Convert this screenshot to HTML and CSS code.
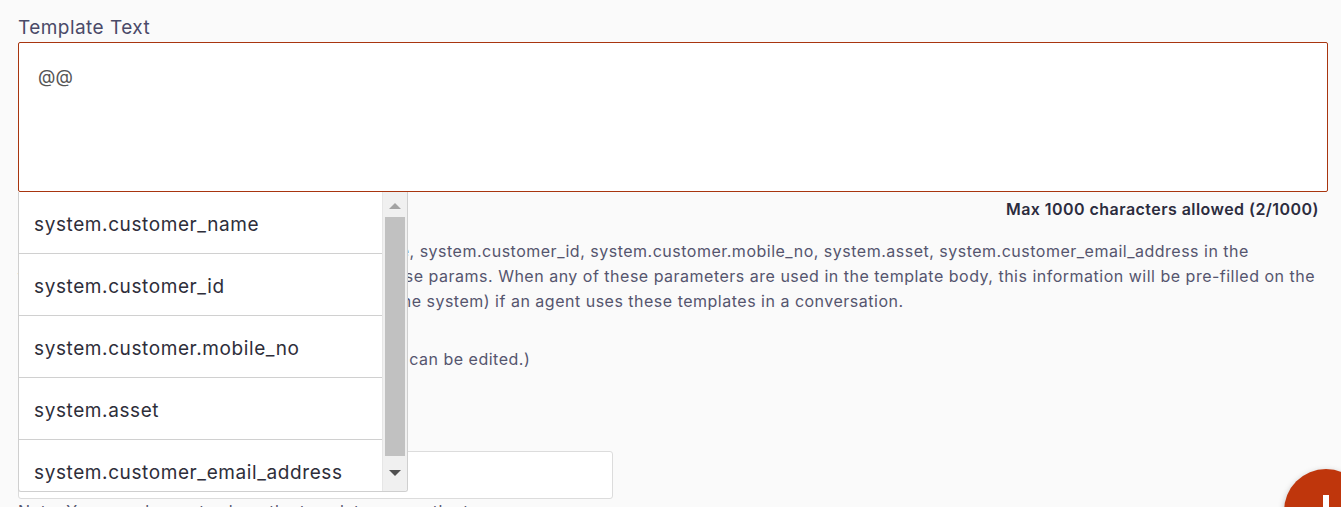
FILE: index.html
```html
<!DOCTYPE html>
<html>
<head>
<meta charset="utf-8">
<link rel="stylesheet" href="styles.css">
</head>
<body>
<div class="page">
  <label class="label">Template Text</label>
  <div class="field">
    <div class="textarea">@@</div>
    <div class="menu">
      <ul class="menu-list">
        <li class="menu-item">system.customer_name</li>
        <li class="menu-item">system.customer_id</li>
        <li class="menu-item">system.customer.mobile_no</li>
        <li class="menu-item">system.asset</li>
        <li class="menu-item">system.customer_email_address</li>
      </ul>
      <div class="scrollbar">
        <div class="arrow up"></div>
        <div class="thumb"></div>
        <div class="arrow down"></div>
      </div>
    </div>
  </div>
  <div class="counter">Max 1000 characters allowed (2/1000)</div>
  <p class="help">Note: You can add fields system.customer_name, system.customer_id, system.customer.mobile_no, system.asset, system.customer_email_address in the<br>template body. Type @@ in the editor to see these params. When any of these parameters are used in the template body, this information will be pre-filled on the<br>customer info (if the information is available in the system) if an agent uses these templates in a conversation.<br>Example: Hi @@</p>
  <p class="help">(Note: Only the values of the parameters in bold can be edited.)</p>
  <div class="input-row">
    <div class="input"></div>
  </div>
  <p class="note">Note: You can choose to share the template across the team.</p>
</div>
<button class="fab" aria-label="Add"><span class="plus"></span></button>
</body>
</html>
```

FILE: styles.css
```css
html, body {
  margin: 0;
  padding: 0;
  background: #fafafa;
  font-family: Inter, "Open Sans", sans-serif;
  overflow: hidden;
  height: 507px;
}

.page {
  padding: 14px 13px 0 18px;
}

.label {
  display: block;
  font-size: 19px;
  letter-spacing: 0.45px;
  line-height: 28px;
  color: #4a4a68;
}

.field {
  position: relative;
}

.textarea {
  height: 150px;
  background: #fff;
  border: 1px solid #a8350f;
  border-radius: 2px;
  padding: 22px 19px;
  box-sizing: border-box;
  font-size: 18px;
  color: #555;
  line-height: 24px;
}

.menu {
  position: absolute;
  left: 0;
  top: 150px;
  width: 390px;
  height: 300px;
  background: #fff;
  border: 1px solid #cfcfcf;
  border-top: none;
  border-radius: 0 0 3px 3px;
  box-sizing: border-box;
  display: flex;
  z-index: 2;
  overflow: hidden;
}

.menu-list {
  list-style: none;
  margin: 0;
  padding: 0;
  flex: 1;
  overflow: hidden;
}

.menu-item {
  height: 62px;
  box-sizing: border-box;
  border-bottom: 1px solid #d0d0d0;
  padding: 3px 15px 0;
  display: flex;
  align-items: center;
  font-size: 19px;
  letter-spacing: 0.6px;
  color: #2e2e3a;
}

.menu-item:last-child {
  border-bottom: none;
}

.scrollbar {
  width: 24px;
  background: #f0f0f0;
  display: flex;
  flex-direction: column;
  align-items: center;
  border-left: 1px solid #e6e6e6;
}

.arrow {
  width: 0;
  height: 0;
  border-left: 6px solid transparent;
  border-right: 6px solid transparent;
}

.arrow.up {
  border-bottom: 6px solid #a3a3a3;
  margin: 11px 0 8px;
}

.arrow.down {
  border-top: 6px solid #505050;
  margin: 14px 0 0;
}

.thumb {
  width: 20px;
  height: 239px;
  background: #c1c1c1;
}

.counter {
  text-align: right;
  font-size: 16px;
  letter-spacing: 0.45px;
  font-weight: 600;
  color: #2c2c3e;
  padding: 7px 9px 0 0;
  line-height: 20px;
}

.help {
  margin: 20px 0 0;
  font-size: 16px;
  letter-spacing: 0.5px;
  line-height: 25px;
  color: #55556e;
}

.help + .help {
  margin-top: 8px;
}

.input-row {
  margin-top: 79px;
}

.input {
  width: 595px;
  height: 48px;
  background: #fff;
  border: 1px solid #dcdcdc;
  border-radius: 3px;
  box-sizing: border-box;
}

.note {
  margin: 2px 0 0;
  font-size: 16px;
  letter-spacing: 0.5px;
  line-height: 20px;
  color: #55556e;
}

.fab {
  position: fixed;
  left: 1284px;
  top: 469px;
  width: 84px;
  height: 84px;
  border-radius: 50%;
  background: #bf360c;
  border: none;
  padding: 0;
  box-shadow: 0 2px 6px rgba(0,0,0,0.25);
}

.plus {
  position: absolute;
  left: 42px;
  top: 26px;
  width: 0;
  height: 0;
}

.plus::before,
.plus::after {
  content: "";
  position: absolute;
  background: #fff;
}

.plus::before {
  left: -3px;
  top: 0;
  width: 6px;
  height: 30px;
}

.plus::after {
  left: -15px;
  top: 12px;
  width: 30px;
  height: 6px;
}
```
